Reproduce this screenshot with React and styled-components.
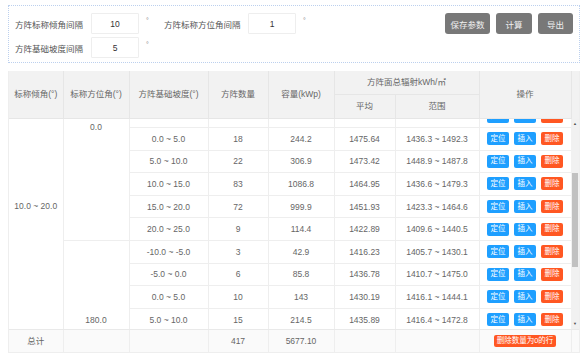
import React, { useLayoutEffect, useRef } from 'react';
import styled, { createGlobalStyle } from 'styled-components';

// row pitch, border included (border-box)
const ROW_H = 22.6;

const GlobalStyle = createGlobalStyle`
  html, body {
    margin: 0;
    background: #fff;
    font-family: "Liberation Sans", "Noto Sans CJK SC", sans-serif;
    color: #666;
  }
  * { box-sizing: border-box; }
`;

const groups = [
  {
    tilt: '10.0 ~ 20.0',
    azimuths: [
      {
        az: '0.0',
        rows: [
          ['-25.0 ~ -20.0', 2, '28.6', '1398.52', '1390.2 ~ 1407.1'],
          ['-20.0 ~ -15.0', 5, '71.5', '1405.17', '1394.8 ~ 1418.3'],
          ['-15.0 ~ -10.0', 12, '163.2', '1419.36', '1401.5 ~ 1433.9'],
          ['-10.0 ~ -5.0', 26, '354.1', '1437.08', '1412.7 ~ 1452.6'],
          ['-5.0 ~ 0.0', 41, '560.3', '1458.41', '1429.8 ~ 1476.2'],
          ['0.0 ~ 5.0', 18, '244.2', '1475.64', '1436.3 ~ 1492.3'],
          ['5.0 ~ 10.0', 22, '306.9', '1473.42', '1448.9 ~ 1487.8'],
          ['10.0 ~ 15.0', 83, '1086.8', '1464.95', '1436.6 ~ 1479.3'],
          ['15.0 ~ 20.0', 72, '999.9', '1451.93', '1423.3 ~ 1464.6'],
          ['20.0 ~ 25.0', 9, '114.4', '1422.89', '1409.6 ~ 1440.5'],
        ],
      },
      {
        az: '180.0',
        rows: [
          ['-10.0 ~ -5.0', 3, '42.9', '1416.23', '1405.7 ~ 1430.1'],
          ['-5.0 ~ 0.0', 6, '85.8', '1436.78', '1410.7 ~ 1475.0'],
          ['0.0 ~ 5.0', 10, '143', '1430.19', '1416.1 ~ 1444.1'],
          ['5.0 ~ 10.0', 15, '214.5', '1435.89', '1416.4 ~ 1472.8'],
          ['10.0 ~ 15.0', 48, '648.0', '1427.66', '1409.3 ~ 1458.2'],
          ['15.0 ~ 20.0', 32, '436.8', '1418.05', '1401.9 ~ 1437.4'],
          ['20.0 ~ 25.0', 13, '176.2', '1403.71', '1392.6 ~ 1421.5'],
        ],
      },
    ],
  },
];

const colWidths = [54, 66, 79, 60, 66, 61, 84, 92];

const Cols = () => (
  <colgroup>
    {colWidths.map((w, i) => (
      <col key={i} style={{ width: w }} />
    ))}
  </colgroup>
);

const App = () => {
  const bodyRef = useRef(null);

  useLayoutEffect(() => {
    if (bodyRef.current) bodyRef.current.scrollTop = 103.5;
  }, []);

  const tilt = groups[0];
  const tiltRows = tilt.azimuths.reduce((n, a) => n + a.rows.length, 0);

  return (
    <Page>
      <GlobalStyle />
      <Panel>
        <Form>
          <FormRow>
            <Label $w={76}>方阵标称倾角间隔</Label>
            <Input defaultValue="10" />
            <Unit>°</Unit>
            <Label $w={84}>方阵标称方位角间隔</Label>
            <Input defaultValue="1" />
            <Unit>°</Unit>
          </FormRow>
          <FormRow>
            <Label $w={76}>方阵基础坡度间隔</Label>
            <Input defaultValue="5" />
            <Unit>°</Unit>
          </FormRow>
        </Form>
        <Toolbar>
          <GreyButton $w={45}>保存参数</GreyButton>
          <GreyButton $w={36}>计算</GreyButton>
          <GreyButton $w={35}>导出</GreyButton>
        </Toolbar>
      </Panel>

      <TableBox>
        <HeadRow>
          <Table>
            <Cols />
            <thead>
              <tr>
                <Th rowSpan={2}>标称倾角(°)</Th>
                <Th rowSpan={2}>标称方位角(°)</Th>
                <Th rowSpan={2}>方阵基础坡度(°)</Th>
                <Th rowSpan={2}>方阵数量</Th>
                <Th rowSpan={2}>容量(kWp)</Th>
                <Th colSpan={2} $h={23}>方阵面总辐射kWh/㎡</Th>
                <Th rowSpan={2}>操作</Th>
              </tr>
              <tr>
                <Th $h={24}>平均</Th>
                <Th $h={24}>范围</Th>
              </tr>
            </thead>
          </Table>
          <Gutter $bg="#f2f2f2" />
        </HeadRow>

        <BodyRow>
          <BodyScroll ref={bodyRef}>
            <Table>
              <Cols />
              <tbody>
                {tilt.azimuths.map((a, ai) =>
                  a.rows.map((r, ri) => (
                    <tr key={`${ai}-${ri}`}>
                      {ai === 0 && ri === 0 && <Td rowSpan={tiltRows}>{tilt.tilt}</Td>}
                      {ri === 0 && <Td rowSpan={a.rows.length}>{a.az}</Td>}
                      <Td>{r[0]}</Td>
                      <Td>{r[1]}</Td>
                      <Td>{r[2]}</Td>
                      <Td>{r[3]}</Td>
                      <Td>{r[4]}</Td>
                      <Td>
                        <Actions>
                          <SmallButton $bg="#1e9fff">定位</SmallButton>
                          <SmallButton $bg="#1e9fff">插入</SmallButton>
                          <SmallButton $bg="#ff5722">删除</SmallButton>
                        </Actions>
                      </Td>
                    </tr>
                  ))
                )}
              </tbody>
            </Table>
          </BodyScroll>
          <ScrollBar>
            <Arrow>▲</Arrow>
            <Track>
              <Thumb $top={44} $size={94} />
            </Track>
            <Arrow>▼</Arrow>
          </ScrollBar>
        </BodyRow>

        <FootRow>
          <Table>
            <Cols />
            <tbody>
              <tr>
                <Td $foot>总计</Td>
                <Td $foot />
                <Td $foot />
                <Td $foot>417</Td>
                <Td $foot>5677.10</Td>
                <Td $foot />
                <Td $foot />
                <Td $foot>
                  <SmallButton $bg="#ff5722" $wide>删除数量为0的行</SmallButton>
                </Td>
              </tr>
            </tbody>
          </Table>
          <Gutter $bg="#fafafa" />
        </FootRow>
      </TableBox>
    </Page>
  );
};

const Page = styled.div`
  padding: 5px 6px 0 8px;
  width: 586px;
`;

const Panel = styled.div`
  height: 58px;
  width: 572px;
  border: 1px dotted #bcd0ee;
  display: flex;
  justify-content: space-between;
  align-items: flex-start;
  padding: 7px 6px 0 6px;
`;

const Form = styled.div`
  display: flex;
  flex-direction: column;
  gap: 3px;
`;

const FormRow = styled.div`
  display: flex;
  align-items: center;
  height: 21px;
`;

const Label = styled.div`
  width: ${(p) => p.$w}px;
  font-size: 8.5px;
  color: #555;
  white-space: nowrap;
`;

const Input = styled.input`
  width: 48px;
  height: 21px;
  border: 1px solid #eee;
  border-radius: 1px;
  background: #fff;
  text-align: center;
  font-family: inherit;
  font-size: 8.5px;
  color: #333;
  padding: 0;
  outline: none;
`;

const Unit = styled.div`
  width: 25px;
  padding-left: 7px;
  font-size: 7px;
  line-height: 8px;
  color: #888;
  align-self: flex-start;
  padding-top: 4px;
`;

const Toolbar = styled.div`
  display: flex;
  gap: 6px;
`;

const GreyButton = styled.div`
  width: ${(p) => p.$w}px;
  height: 21px;
  border-radius: 3px;
  background: #787878;
  color: #f0f0f0;
  font-size: 8.5px;
  display: flex;
  align-items: center;
  justify-content: center;
`;

const TableBox = styled.div`
  margin-top: 8px;
  width: 572px;
  border: 1px solid #eee;
  border-top: none;
`;

const HeadRow = styled.div`
  display: flex;
  background: #f2f2f2;
`;

const BodyRow = styled.div`
  display: flex;
  height: 210px;
`;

const FootRow = styled.div`
  display: flex;
  background: #fafafa;
  border-top: 1px solid #e9e9e9;
`;

const Table = styled.table`
  table-layout: fixed;
  border-collapse: collapse;
  width: 562px;
  flex: none;
`;

const Th = styled.th`
  height: ${(p) => (p.$h ? `${p.$h}px` : 'auto')};
  font-weight: normal;
  font-size: 8.5px;
  line-height: 10px;
  color: #666;
  text-align: center;
  border-right: 1px solid #e6e6e6;
  border-bottom: 1px solid #e6e6e6;
  padding: 0;
  white-space: nowrap;
`;

const Td = styled.td`
  height: ${(p) => (p.$foot ? 22 : ROW_H)}px;
  padding: 0;
  font-size: 8.5px;
  line-height: 10px;
  color: #666;
  text-align: center;
  border-right: 1px solid #eeeeee;
  border-bottom: ${(p) => (p.$foot ? 'none' : '1px solid #eeeeee')};
  white-space: nowrap;
`;

const BodyScroll = styled.div`
  width: 562px;
  height: 210px;
  overflow: hidden;
  flex: none;
`;

const Gutter = styled.div`
  flex: 1;
  background: ${(p) => p.$bg};
`;

const ScrollBar = styled.div`
  flex: 1;
  display: flex;
  flex-direction: column;
  align-items: stretch;
  background: #f1f1f1;
  padding: 0 1px;
`;

const Arrow = styled.div`
  height: 10px;
  font-size: 4px;
  color: #505050;
  display: flex;
  align-items: center;
  justify-content: center;
`;

const Track = styled.div`
  flex: 1;
  position: relative;
`;

const Thumb = styled.div`
  position: absolute;
  left: 0;
  right: 0;
  top: ${(p) => p.$top}px;
  height: ${(p) => p.$size}px;
  background: #c1c1c1;
`;

const Actions = styled.div`
  display: flex;
  justify-content: center;
  gap: 5px;
`;

const SmallButton = styled.div`
  display: inline-flex;
  align-items: center;
  justify-content: center;
  width: ${(p) => (p.$wide ? 62 : 22)}px;
  height: ${(p) => (p.$wide ? 12 : 13)}px;
  border-radius: 2px;
  background: ${(p) => p.$bg};
  color: #fff;
  font-size: 7.5px;
  vertical-align: middle;
`;

export default App;
